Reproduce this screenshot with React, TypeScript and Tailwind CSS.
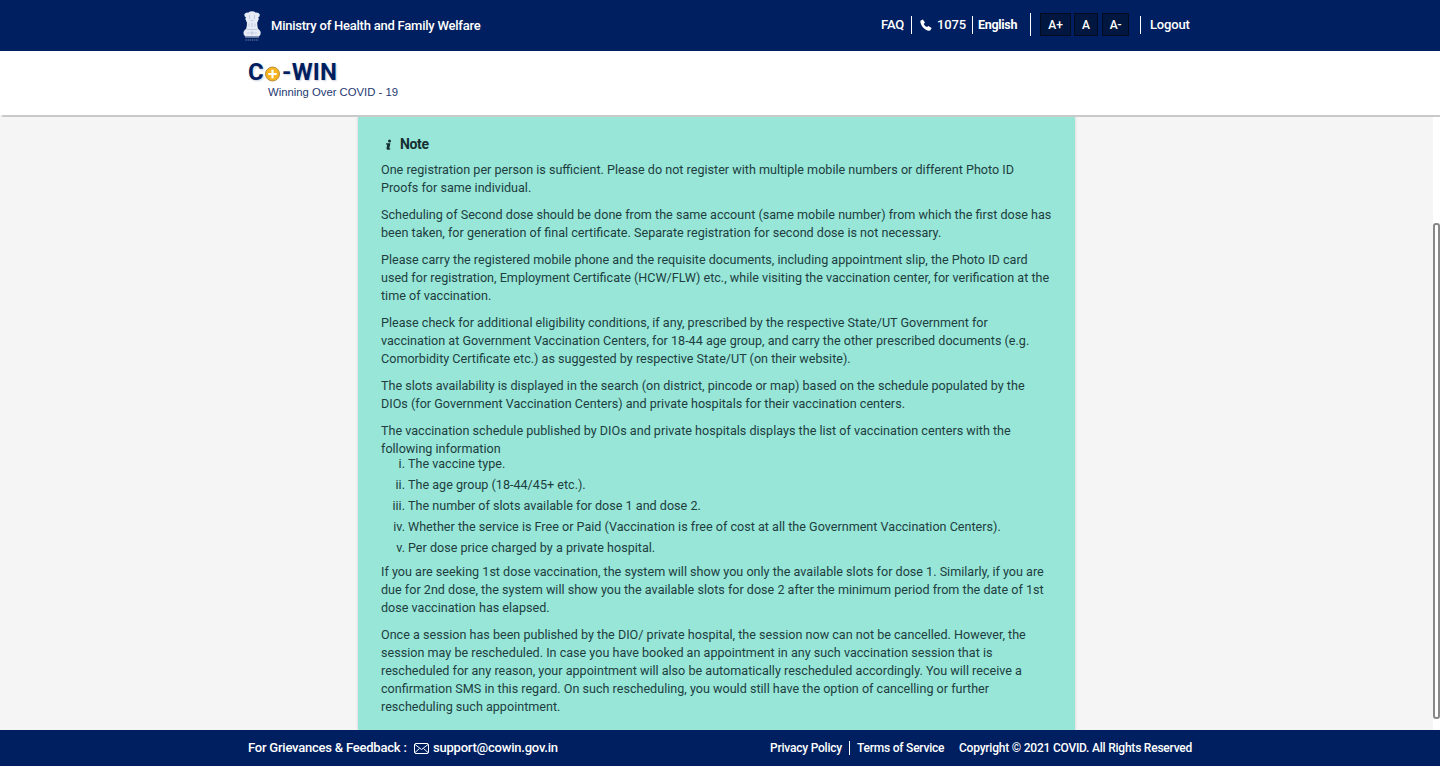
import React from "react";

const before: string[][] = [
  [
    "One registration per person is sufficient. Please do not register with multiple mobile numbers or different Photo ID",
    "Proofs for same individual.",
  ],
  [
    "Scheduling of Second dose should be done from the same account (same mobile number) from which the first dose has",
    "been taken, for generation of final certificate. Separate registration for second dose is not necessary.",
  ],
  [
    "Please carry the registered mobile phone and the requisite documents, including appointment slip, the Photo ID card",
    "used for registration, Employment Certificate (HCW/FLW) etc., while visiting the vaccination center, for verification at the",
    "time of vaccination.",
  ],
  [
    "Please check for additional eligibility conditions, if any, prescribed by the respective State/UT Government for",
    "vaccination at Government Vaccination Centers, for 18-44 age group, and carry the other prescribed documents (e.g.",
    "Comorbidity Certificate etc.) as suggested by respective State/UT (on their website).",
  ],
  [
    "The slots availability is displayed in the search (on district, pincode or map) based on the schedule populated by the",
    "DIOs (for Government Vaccination Centers) and private hospitals for their vaccination centers.",
  ],
  [
    "The vaccination schedule published by DIOs and private hospitals displays the list of vaccination centers with the",
    "following information",
  ],
];

const items: [string, string][] = [
  ["i.", "The vaccine type."],
  ["ii.", "The age group (18-44/45+ etc.)."],
  ["iii.", "The number of slots available for dose 1 and dose 2."],
  ["iv.", "Whether the service is Free or Paid (Vaccination is free of cost at all the Government Vaccination Centers)."],
  ["v.", "Per dose price charged by a private hospital."],
];

const after: string[][] = [
  [
    "If you are seeking 1st dose vaccination, the system will show you only the available slots for dose 1. Similarly, if you are",
    "due for 2nd dose, the system will show you the available slots for dose 2 after the minimum period from the date of 1st",
    "dose vaccination has elapsed.",
  ],
  [
    "Once a session has been published by the DIO/ private hospital, the session now can not be cancelled. However, the",
    "session may be rescheduled. In case you have booked an appointment in any such vaccination session that is",
    "rescheduled for any reason, your appointment will also be automatically rescheduled accordingly. You will receive a",
    "confirmation SMS in this regard. On such rescheduling, you would still have the option of cancelling or further",
    "rescheduling such appointment.",
  ],
];

function Paragraph({ lines }: { lines: string[] }) {
  return (
    <p>
      {lines.map((line) => (
        <span key={line} className="block whitespace-nowrap">
          {line}
        </span>
      ))}
    </p>
  );
}

function Emblem() {
  return (
    <svg className="mt-[11px] h-[31px] w-[18px] shrink-0" viewBox="0 0 18 31">
      <path
        d="M5.5 1.5 7 .6 9 .2l2 .4 1.500.9 2.500.2 1.800 1.500-.3 2.200-1.300.8.7 1.500-1 2.500-.7 1.500.2 3 .6 3 1.500 1.200 1.200 2-.2 2.500-1.300 1.800H2L.7 23.500l-.2-2.500 1.200-2 1.500-1.200.6-3 .2-3L3.300 10.300l-1-2.500.7-1.500L1.700 5.500 1.300 3.300 3 1.800z"
        fill="#e6ebf5"
      />
      <path d="M6.500 4v4M11.500 4v4M7.500 9.500h3M6 12.500v3M9 11.500v4.500M12 12.500v3M4 18.500h10M4 22h2.500M8 21h2v2H8zM11.500 22H14" stroke="#b7c1da" strokeWidth=".8" fill="none" />
      <path d="M2 26h14" stroke="#c4cde2" strokeWidth="1" />
      <path d="M2.500 29h13" stroke="#6c7ba8" strokeWidth="1.200" strokeDasharray="1.500 .6" />
    </svg>
  );
}

export default function App() {
  return (
    <div className="flex h-[766px] w-[1440px] flex-col overflow-hidden bg-white font-['Roboto',sans-serif] text-[12.6px]">
      <header className="flex h-[51px] shrink-0 bg-[#001f60] pl-[243px] text-white">
        <div className="flex w-[638px] shrink-0">
          <Emblem />
          <span className="ml-[10px] mt-[16px] text-[13px] leading-5 font-medium tracking-[-0.23px] whitespace-nowrap">Ministry of Health and Family Welfare</span>
        </div>
        <nav className="flex h-[50px] items-center text-[13px] font-medium tracking-[-0.15px] whitespace-nowrap">
          <span className="w-[30px]">FAQ</span>
          <span className="h-[18px] w-px bg-white" />
          <svg className="ml-[8px] h-[12px] w-[12px]" viewBox="0 0 12 12" fill="white">
            <path d="M.8 1.600 2.900.4 5 3.500 3.700 4.900c.8 1.500 1.800 2.500 3.300 3.200l1.400-1.200 3.200 2-1 2.200c-.4.5-1 .7-1.700.6C4.700 11 1 7.200.4 2.900.3 2.300.4 1.900.8 1.600z" />
          </svg>
          <span className="ml-[5px] w-[35px]">1075</span>
          <span className="h-[18px] w-px bg-white" />
          <span className="ml-[5px] w-[52px] text-[12.5px] font-bold tracking-[-0.3px]">English</span>
          <span className="-mt-[2px] h-[23px] w-px bg-white" />
          <div className="-mt-[2px] ml-[9px] flex text-center text-[12px] leading-[22px]">
            <span className="h-[23px] w-[31px] border border-[#000b22] bg-[#02173f]">A+</span>
            <span className="ml-[3px] h-[23px] w-[24px] border border-[#000b22] bg-[#02173f]">A</span>
            <span className="ml-[4px] h-[23px] w-[27px] border border-[#000b22] bg-[#02173f]">A-</span>
          </div>
          <span className="ml-[11px] h-[18px] w-px bg-white" />
          <span className="ml-[9px]">Logout</span>
        </nav>
      </header>

      <div className="flex h-[64px] shrink-0 flex-col pl-[248px] pt-[9px] text-[#001f60]">
        <div className="flex h-[25px] items-center text-[24px] leading-[25px] font-bold tracking-[0.2px] [text-shadow:1px_1px_2px_#c6cddb]">
          <span className="w-[16px]">C</span>
          <svg className="mt-[3px] h-[16px] w-[17px]" viewBox="0 0 17 16">
            <circle cx="8.500" cy="8" r="7" fill="#f6b51e" stroke="#b98e3c" strokeWidth="1" />
            <path d="M8.500 3.800v8.400M4.300 8h8.400" stroke="white" strokeWidth="2.200" />
          </svg>
          <span className="ml-px">-WIN</span>
        </div>
        <span className="ml-[20px] text-[11.3px] leading-[14px] text-[#1d3870] font-['Liberation_Sans',sans-serif] whitespace-nowrap">Winning Over COVID - 19</span>
      </div>

      <div className="flex h-[2px] shrink-0">
        <span className="w-[3px] bg-linear-to-r from-white to-[#c8caca]" />
        <span className="flex-1 bg-[#c8caca]" />
      </div>

      <div className="flex h-[613px] shrink-0">
        <main className="flex w-[1433px] justify-center bg-[#f5f5f5]">
          <section className="w-[717px] bg-[#97e6d8] pl-[23px] pt-[18px] text-[#213e3f] shadow-[0_0_3px_#ccc]">
            <h2 className="flex h-[19px] items-center pl-[4px] text-[14px] font-bold tracking-[-0.35px] text-[#152f31]">
              <svg className="mr-[8px] h-[12px] w-[7px]" viewBox="0 0 6 12" fill="currentColor">
                <circle cx="4" cy="2" r="1.500" />
                <path d="M.7 4.300h4.200L3.800 9.300c0 .4.300.4 1 0v.9c-1 .9-4 1-3.800-.7L1.700 5.500H.4z" />
              </svg>
              Note
            </h2>
            <div className="mt-[7px] flex flex-col gap-[9px] leading-[18px]">
              {before.map((lines) => (
                <Paragraph key={lines[0]} lines={lines} />
              ))}
            </div>
            <ol className="-mt-[5px] leading-[21px]">
              {items.map(([mark, text]) => (
                <li key={mark} className="flex gap-[3px] whitespace-nowrap">
                  <span className="w-[24px] text-right">{mark}</span>
                  <span>{text}</span>
                </li>
              ))}
            </ol>
            <div className="mt-[5px] flex flex-col gap-[9px] leading-[18px]">
              {after.map((lines) => (
                <Paragraph key={lines[0]} lines={lines} />
              ))}
            </div>
          </section>
        </main>
        <div className="w-[7px] bg-white pt-[106px]">
          <div className="h-[496px] w-[7px] rounded-[3px] border-2 border-[#888] bg-white" />
        </div>
      </div>

      <footer className="flex h-[36px] shrink-0 items-center bg-[#001f60] pl-[248px] text-[13px] font-medium tracking-[-0.22px] whitespace-nowrap text-white">
        <span className="w-[166px]">For Grievances &amp; Feedback :</span>
        <svg className="h-[11px] w-[15px]" viewBox="0 0 15 11" fill="none" stroke="white">
          <rect x=".5" y=".5" width="14" height="10" rx="1.500" />
          <path d="m1 1.500 6.500 5 6.500-5M1 9.500l4.500-4M14 9.500l-4.500-4" />
        </svg>
        <span className="ml-[4px] w-[337px]">support@cowin.gov.in</span>
        <div className="flex items-center text-[12px]">
          <span className="w-[79px]">Privacy Policy</span>
          <span className="h-[14px] w-px bg-white" />
          <span className="ml-[7px] w-[102px]">Terms of Service</span>
          <span>Copyright © 2021 COVID. All Rights Reserved</span>
        </div>
      </footer>
    </div>
  );
}
